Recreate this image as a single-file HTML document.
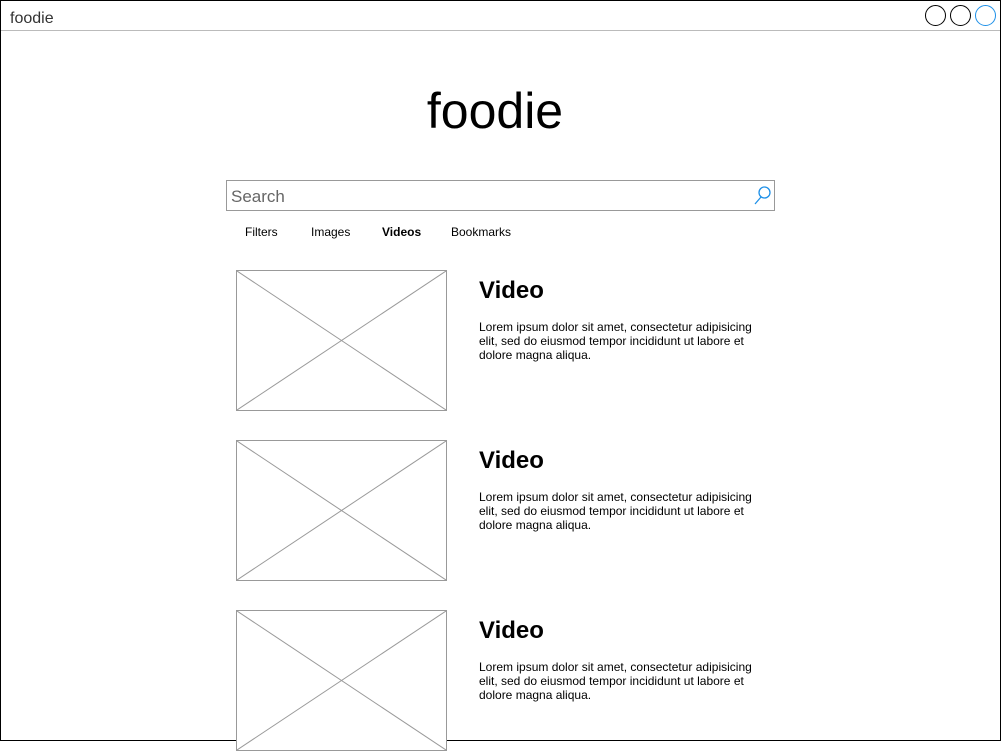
<!DOCTYPE html>
<html><head><meta charset="utf-8"><style>
body{margin:0;width:1002px;height:752px;background:#fff;position:relative;overflow:hidden;font-family:"Liberation Sans",Arial,sans-serif}
.a{position:absolute}
.frame{left:0;top:0;width:999px;height:739px;border:1px solid #000}
.tb{left:1px;top:30px;width:999px;height:1px;background:#bbb}
.circ{top:5px;width:19px;height:19px;border:1px solid #000;border-radius:50%}
.thumb{width:209px;height:139px;border:1px solid #999;background:#fff}
h2{position:absolute;margin:0;font-size:24px;font-weight:bold;color:#000}
p{position:absolute;margin:0;font-size:12px;line-height:14px;width:290px;color:#000}
.tab{top:225px;font-size:12px}
</style></head><body>
<div class="a frame"></div>
<div class="a tb"></div>
<div class="a" style="left:10px;top:10px;font-size:16px;color:#333">foodie</div>
<div class="a circ" style="left:925px"></div>
<div class="a circ" style="left:950px"></div>
<div class="a circ" style="left:975px;border-color:#1e90e8"></div>
<div class="a" style="left:0;width:990px;top:82px;text-align:center;font-size:50px">foodie</div>
<div class="a" style="left:226px;top:180px;width:547px;height:29px;border:1px solid #999"></div>
<div class="a" style="left:231px;top:187px;font-size:17px;color:#666">Search</div>
<svg class="a" style="left:753px;top:185px" width="20" height="22" viewBox="0 0 20 22"><circle cx="11.5" cy="7.5" r="5.5" fill="none" stroke="#1e90e8" stroke-width="1.3"/><line x1="8" y1="12" x2="2" y2="19" stroke="#1e90e8" stroke-width="1.3"/></svg>
<div class="a tab" style="left:245px">Filters</div>
<div class="a tab" style="left:311px">Images</div>
<div class="a tab" style="left:382px;font-weight:bold">Videos</div>
<div class="a tab" style="left:451px">Bookmarks</div>

<svg class="a thumb" style="left:236px;top:270px" width="209" height="139"><line x1="0" y1="0" x2="209" y2="139" stroke="#999"/><line x1="209" y1="0" x2="0" y2="139" stroke="#999"/></svg>
<h2 style="left:479px;top:277px">Video</h2>
<p style="left:479px;top:320px">Lorem ipsum dolor sit amet, consectetur adipisicing elit, sed do eiusmod tempor incididunt ut labore et dolore magna aliqua.</p>

<svg class="a thumb" style="left:236px;top:440px" width="209" height="139"><line x1="0" y1="0" x2="209" y2="139" stroke="#999"/><line x1="209" y1="0" x2="0" y2="139" stroke="#999"/></svg>
<h2 style="left:479px;top:447px">Video</h2>
<p style="left:479px;top:490px">Lorem ipsum dolor sit amet, consectetur adipisicing elit, sed do eiusmod tempor incididunt ut labore et dolore magna aliqua.</p>

<svg class="a thumb" style="left:236px;top:610px" width="209" height="139"><line x1="0" y1="0" x2="209" y2="139" stroke="#999"/><line x1="209" y1="0" x2="0" y2="139" stroke="#999"/></svg>
<h2 style="left:479px;top:617px">Video</h2>
<p style="left:479px;top:660px">Lorem ipsum dolor sit amet, consectetur adipisicing elit, sed do eiusmod tempor incididunt ut labore et dolore magna aliqua.</p>
</body></html>
